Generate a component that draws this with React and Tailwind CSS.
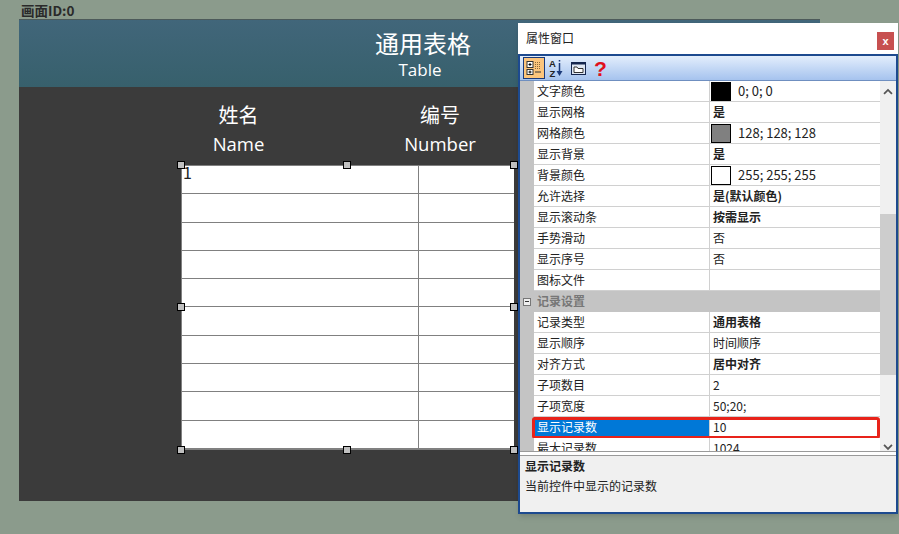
import React from "react";

const cjk = "font-['Noto_Sans_CJK_SC','Noto_Sans',sans-serif]";

const rows = [
  { name: "文字颜色", value: "0; 0; 0", swatch: "bg-black" },
  { name: "显示网格", value: "是", bold: true },
  { name: "网格颜色", value: "128; 128; 128", swatch: "bg-[#808080]" },
  { name: "显示背景", value: "是", bold: true },
  { name: "背景颜色", value: "255; 255; 255", swatch: "bg-white" },
  { name: "允许选择", value: "是(默认颜色)", bold: true },
  { name: "显示滚动条", value: "按需显示", bold: true },
  { name: "手势滑动", value: "否" },
  { name: "显示序号", value: "否" },
  { name: "图标文件", value: "" },
  { section: true, name: "记录设置" },
  { name: "记录类型", value: "通用表格", bold: true },
  { name: "显示顺序", value: "时间顺序" },
  { name: "对齐方式", value: "居中对齐", bold: true },
  { name: "子项数目", value: "2" },
  { name: "子项宽度", value: "50;20;" },
  { name: "显示记录数", value: "10", selected: true },
  { name: "最大记录数", value: "1024" },
];

const Handle = ({ className }) => (
  <span className={`absolute w-[8px] h-[8px] bg-[#c0c0c0] border border-black ${className}`}></span>
);

const PropRow = ({ row }) => {
  if (row.section) {
    return (
      <div className="flex h-[21px] items-center bg-[#c4c4c4]">
        <span className="flex items-center justify-center w-[14px] shrink-0">
          <span className="flex items-center justify-center w-[8px] h-[8px] border border-[#777] bg-[#eee]">
            <span className="w-[4px] h-px bg-[#333]"></span>
          </span>
        </span>
        <span className="pl-[3px] pb-[1px] text-[12px] font-bold text-[#777]">{row.name}</span>
      </div>
    );
  }
  return (
    <div className="relative flex h-[21px] bg-[#c4c4c4]">
      <div className="w-[14px] shrink-0"></div>
      <div
        className={`flex items-center w-[176px] shrink-0 pl-[3px] text-[12px] border-r border-b border-[#d0d0d0] ${
          row.selected ? "bg-[#0078d7] text-white" : "bg-white text-[#222]"
        }`}
      >
        {row.name}
      </div>
      <div
        className={`flex flex-1 items-center pl-[3px] text-[#222] bg-white border-b border-[#d0d0d0] ${
          row.bold ? "font-bold" : ""
        } ${row.swatch ? "text-[13px]" : "text-[12px]"}`}
      >
        {row.swatch && (
          <span className={`w-[20px] h-[19px] mr-[7px] -ml-[2px] border border-black ${row.swatch}`}></span>
        )}
        {row.value}
      </div>
      {row.selected && (
        <span className="absolute left-[12px] right-0 top-0 h-[22px] border-[3px] border-[#e8231a] rounded-[3px]"></span>
      )}
    </div>
  );
};

const ToolIcons = () => (
  <div className="flex items-center h-[25px] pl-[3px] bg-gradient-to-b from-[#e3eefc] to-[#a6c3ee] border-b border-[#6f8fc0]">
    <span className="flex items-center justify-center w-[22px] h-[22px] bg-[#fcc57c] border border-[#1b3a7a]">
      <svg width="16" height="16" viewBox="0 0 16 16">
        <rect x="1" y="1.5" width="6" height="6" fill="#fff" stroke="#333" />
        <path d="M2.5 4.5h3M4 3v3" stroke="#000" />
        <rect x="1" y="9.5" width="6" height="5" fill="#fff" stroke="#333" />
        <path d="M2.5 12h3M4 10.5v3" stroke="#000" />
        <path d="M9 2.5h6M9 4.5h6M9 6.5h6M9 8.5h6" stroke="#8a6a3a" strokeDasharray="1 1" />
        <path d="M9 12h6" stroke="#333" />
      </svg>
    </span>
    <svg width="14" height="20" viewBox="0 0 14 20" className="ml-[4px]">
      <text x="0" y="9" fontSize="9.5" fontWeight="700" fill="#222" fontFamily="Liberation Sans">A</text>
      <text x="0.5" y="19" fontSize="9.5" fontWeight="700" fill="#222" fontFamily="Liberation Sans">Z</text>
      <path d="M10.5 2v1.5M10.5 5v9" stroke="#1b3a7a" strokeWidth="1.5" />
      <path d="M7.5 13h6L10.5 18z" fill="#1b3a7a" />
    </svg>
    <svg width="15" height="13" viewBox="0 0 15 13" className="ml-[8px]">
      <rect x="0.5" y="0.5" width="14" height="12" fill="#dfe7f3" stroke="#14264f" />
      <rect x="0.5" y="0.5" width="14" height="2" fill="#14264f" />
      <path d="M3 5h3l1 1.5h5v4H3z" fill="#fff" stroke="#333" />
    </svg>
    <span className="ml-[8px] text-[21px] leading-none font-bold text-[#e0101c] font-['Liberation_Sans',sans-serif]">?</span>
  </div>
);

const PropertyWindow = () => (
  <div className={`absolute left-[518px] top-[23px] w-[380px] h-[491px] flex flex-col bg-white border-b-[2px] border-x-[2px] border-[#1d4a8f] shadow-md ${cjk}`}>
    <div className="flex items-center justify-between h-[31px] -mx-[2px] px-[3px] pl-[8px] bg-white shrink-0">
      <span className="pb-[2px] text-[12px] text-[#222]">属性窗口</span>
      <span className="flex items-center justify-center w-[17px] h-[18px] mt-[5px] mr-[1px] bg-[#c75050] text-white text-[11px] font-bold leading-none font-['Liberation_Sans',sans-serif]">
        x
      </span>
    </div>
    <div className="border-t-[2px] border-[#1d4a8f] shrink-0">
      <ToolIcons />
    </div>
    <div className="flex h-[371px] overflow-hidden shrink-0 border-b border-[#9a9a9a]">
      <div className="w-[360px] shrink-0">
        {rows.map((row) => (
          <PropRow key={row.name} row={row} />
        ))}
      </div>
      <div className="flex-1 flex flex-col items-center bg-[#f0f0f0] relative">
        <svg width="10" height="7" viewBox="0 0 10 7" className="mt-[7px]">
          <path d="M1 6l4-4 4 4" fill="none" stroke="#555" strokeWidth="1.8" />
        </svg>
        <div className="w-full h-[163px] mt-[119px] bg-[#cdcdcd]"></div>
        <svg width="10" height="7" viewBox="0 0 10 7" className="mt-[69px]">
          <path d="M1 1l4 4 4-4" fill="none" stroke="#555" strokeWidth="1.8" />
        </svg>
      </div>
    </div>
    <div className="h-[3px] bg-white shrink-0"></div>
    <div className="flex-1 px-[5px] bg-[#f0f0f0] border-t border-[#9a9a9a] text-[12px] text-[#222]">
      <div className="font-bold leading-[20px]">显示记录数</div>
      <div className="leading-[20px]">当前控件中显示的记录数</div>
    </div>
  </div>
);

const App = () => {
  const tableRows = Array.from({ length: 10 });
  return (
    <div className={`relative w-[899px] h-[534px] overflow-hidden bg-[#8b9b8c] ${cjk}`}>
      <div className="h-[19px] pl-[21px] text-[13.5px] leading-[20px] font-bold text-[#2a2a2a]">画面ID:0</div>

      <div className="ml-[19px] w-[801px] h-[482px] bg-[#3b3b3b] border-t border-[#4d5a5a]">
        <div className="flex flex-col items-center h-[67px] pt-[5px] pl-[7px] bg-gradient-to-b from-[#41667a] to-[#37606c] text-white">
          <span className="text-[24px] leading-[35px]">通用表格</span>
          <span className="mr-[6px] text-[17px] leading-[20px] font-medium font-['Open_Sans',sans-serif]">Table</span>
        </div>

        <div className="ml-[162px] w-[333px]">
          <div className="flex h-[78px] text-white pt-[13px]">
            <div className="w-[115px] shrink-0 flex flex-col items-center">
              <span className="text-[20px] leading-[30px]">姓名</span>
              <span className="text-[18.5px] leading-[28px] font-medium font-['Open_Sans',sans-serif]">Name</span>
            </div>
            <div className="w-[118px] shrink-0 flex flex-col items-center ml-[85px]">
              <span className="text-[20px] leading-[30px]">编号</span>
              <span className="text-[18.5px] leading-[28px] font-medium font-['Open_Sans',sans-serif]">Number</span>
            </div>
          </div>

          <div className="relative h-[285px] bg-white border-y border-l border-[#808080] flex flex-col">
            {tableRows.map((_, i) => (
              <div key={i} className="flex flex-1 border-b last:border-b-0 border-[#808080]">
                <div className="w-[237px] border-r border-[#808080] text-[16px] leading-[13px] text-[#222] pl-[1px]">
                  {i === 0 ? "1" : ""}
                </div>
                <div className="flex-1"></div>
              </div>
            ))}
            <Handle className="left-[-5px] top-[-5px]" />
            <Handle className="left-[161px] top-[-5px]" />
            <Handle className="right-[-4px] top-[-5px]" />
            <Handle className="left-[-5px] top-[137px]" />
            <Handle className="right-[-4px] top-[137px]" />
            <Handle className="left-[-5px] bottom-[-5px]" />
            <Handle className="left-[161px] bottom-[-5px]" />
            <Handle className="right-[-4px] bottom-[-5px]" />
          </div>
        </div>
      </div>

      <PropertyWindow />
    </div>
  );
};

export default App;
